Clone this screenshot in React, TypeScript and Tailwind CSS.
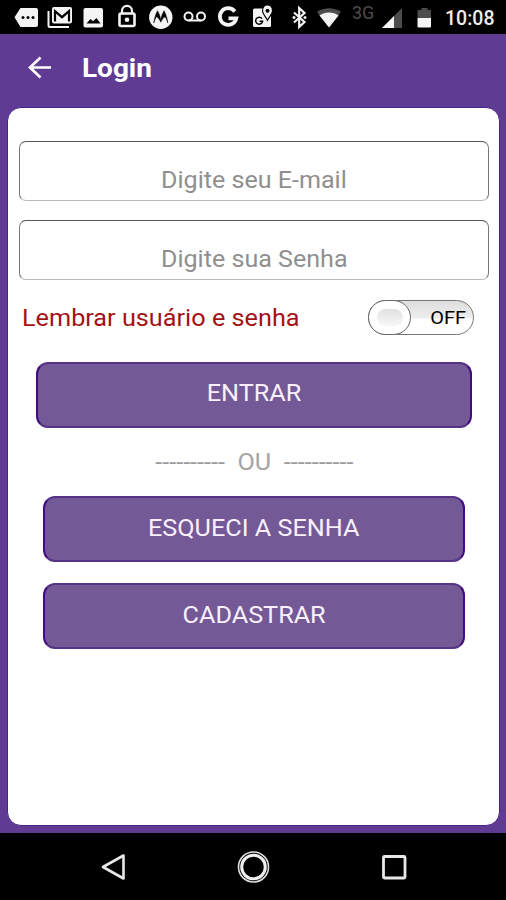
import type { ReactNode } from 'react';

type CellProps = { x: number; w: number; children: ReactNode };

// Each cell shows its own slice of the status bar's coordinate space.
function Cell({ x, w, children }: CellProps) {
  return (
    <svg width={w} height={34} viewBox={`${x} 0 ${w} 34`} className="block shrink-0" fill="none">
      {children}
    </svg>
  );
}

const W = '#f4f4f4';

function StatusBar() {
  return (
    <div className="flex h-[34px] shrink-0 bg-black">
      <Cell x={0} w={42}>
        <path d="M20.500 8H36a2 2 0 0 1 2 2v15a2 2 0 0 1-2 2H20.500l-6-9.700z" fill={W} />
        <circle cx="23" cy="17.500" r="1.500" fill="#000" />
        <circle cx="28" cy="17.500" r="1.500" fill="#000" />
        <circle cx="33" cy="17.500" r="1.500" fill="#000" />
      </Cell>
      <Cell x={42} w={36}>
        <path d="M48.500 11v14.500a1.500 1.500 0 0 0 1.500 1.500h19" stroke={W} strokeWidth="2" />
        <rect x="52" y="7" width="20" height="16.500" rx="2" fill={W} />
        <path d="M55 21.500V11.200l7 6 7-6v10.300" stroke="#000" strokeWidth="2.200" />
        <path d="M55.500 9h13l-6.500 5z" fill={W} />
      </Cell>
      <Cell x={78} w={32}>
        <rect x="83.500" y="8" width="19.500" height="19.500" rx="2" fill={W} />
        <path d="M86.500 23.500l4-4.500 2.500 2.200 3.500-3.200 4 5.500z" fill="#000" />
      </Cell>
      <Cell x={110} w={34}>
        <path d="M122 13.500v-2.600a5 5 0 0 1 10 0v2.600" stroke={W} strokeWidth="2.200" />
        <rect x="119.500" y="13.500" width="15" height="12.500" rx="1.500" stroke={W} strokeWidth="2.600" />
        <circle cx="127" cy="19.800" r="2.300" fill={W} />
      </Cell>
      <Cell x={144} w={34}>
        <circle cx="160.800" cy="17.300" r="11.700" fill={W} />
        <path d="M153.800 23c.6-4.500 1.700-8.500 3.700-12.300 1.500 2.500 2.600 5.400 3.300 9 .7-3.600 1.800-6.500 3.300-9 2 3.800 3.100 7.800 3.700 12.300-.7-2.600-1.600-4.800-2.800-6.300-1.500.8-3 2.800-4.200 5.500-1.200-2.700-2.700-4.700-4.200-5.500-1.200 1.500-2.100 3.700-2.800 6.300z" fill="#000" stroke="#000" strokeWidth=".5" />
      </Cell>
      <Cell x={178} w={34}>
        <circle cx="188.500" cy="16.500" r="4" stroke={W} strokeWidth="2" />
        <circle cx="201" cy="16.500" r="4" stroke={W} strokeWidth="2" />
        <path d="M188.500 20.500H201" stroke={W} strokeWidth="2" />
      </Cell>
      <Cell x={212} w={34}>
        <path d="M234.800 11.500a8.300 8.300 0 1 0 1.500 6.800H228.500" stroke={W} strokeWidth="3.800" />
      </Cell>
      <Cell x={246} w={34}>
        <rect x="253" y="8.500" width="18" height="18.500" rx="1.500" fill={W} />
        <path d="M262 18.600a3.500 3.500 0 1 0 .6 2.700h-3" stroke="#000" strokeWidth="1.500" />
        <path d="M262.500 11c0-3.500 2-6 5-6s5 2.500 5 6c0 3.200-3.300 5.500-5 9.200-1.700-3.700-5-6-5-9.200z" fill={W} stroke="#000" strokeWidth="1.200" />
        <circle cx="267.500" cy="10.800" r="2" fill="#000" />
      </Cell>
      <Cell x={280} w={32}>
        <path d="M294 12.500l10.500 9.500-5.300 5V8l5.300 5L294 22.500" stroke={W} strokeWidth="2.200" />
        <circle cx="294" cy="17.500" r="1.500" fill={W} />
        <circle cx="305" cy="17.500" r="1.500" fill={W} />
      </Cell>
      <Cell x={312} w={34}>
        <path d="M317 12c7-5 17-5 24 0l-12 15.500z" fill="#4c4c4c" />
        <path d="M319.500 15.500c5-4 14-4 19 0l-9.500 12z" fill={W} />
      </Cell>
      <div className="w-[32px] pl-[6px] pt-[4px] font-['Roboto'] text-[18px] leading-[18px] text-[#4c4c4c]">3G</div>
      <Cell x={378} w={30}>
        <path d="M402 8v20h-20z" fill="#4c4c4c" />
        <path d="M394 16v12h-12z" fill={W} />
      </Cell>
      <Cell x={408} w={32}>
        <path d="M417.500 10h4V8h6v2h3.500v8h-13.500z" fill="#4c4c4c" />
        <path d="M417.500 18H431v8.500a1 1 0 0 1-1 1h-11.500a1 1 0 0 1-1-1z" fill={W} />
      </Cell>
      <div className="flex-1 pl-[5px] pt-[9px] font-['Roboto'] text-[19.5px] font-medium leading-[20px] whitespace-nowrap text-[#ededed]">10:08</div>
    </div>
  );
}

function Field({ label }: { label: string }) {
  return (
    <div className="flex h-[60px] justify-center rounded-[7px] border border-x-[#777] border-t-[#555] border-b-[#bbb] pt-[24px] text-[24px] leading-[28px] text-[#8f8f8f]">
      <span className="scale-x-[1.045] whitespace-nowrap">{label}</span>
    </div>
  );
}

function Action({ label, wide }: { label: string; wide?: boolean }) {
  return (
    <button
      className={`${wide ? 'w-[436px] pb-[4px]' : 'w-[422px] pb-[3px]'} flex h-[66px] items-center justify-center self-center rounded-[12px] border-2 border-x-[#430b7f] border-y-[#563386] bg-[#735995] text-[24px] leading-[28px] text-[#faeffd]`}
    >
      <span className="scale-x-[1.05]">{label}</span>
    </button>
  );
}

export default function App() {
  return (
    <div className="flex h-[900px] w-[506px] flex-col overflow-hidden bg-[#603b93] font-['Roboto',sans-serif]">
      <StatusBar />
      <header className="flex h-[73px] shrink-0 items-start pl-[28px] pt-[22px]">
        <svg width="24" height="24" viewBox="0 0 24 24" fill="none" stroke="#fff" strokeWidth="2.700">
          <path d="M23 11.500H2M12.500 1.500L2 11.500l10.500 10" />
        </svg>
        <h1 className="ml-[30px] mt-[-3px] origin-left scale-x-[1.075] text-[26px] font-bold leading-[30px] text-white">Login</h1>
      </header>
      <main className="mb-[7px] ml-[7px] mr-[6px] flex flex-1 flex-col rounded-[14px] border border-[#4b2385] bg-white pl-[11px] pr-[10px] pt-[33px]">
        <div className="flex flex-col gap-[19px]">
          <Field label="Digite seu E-mail" />
          <Field label="Digite sua Senha" />
        </div>
        <div className="mt-[20px] flex h-[36px] items-start justify-between pl-[3px] pr-[15px]">
          <span className="mt-[4px] origin-left scale-x-[1.052] text-[24px] leading-[28px] whitespace-nowrap text-[#a31216]">Lembrar usuário e senha</span>
          <div className="flex h-[35px] w-[106px] items-center justify-between rounded-full border border-[#777] bg-linear-to-b from-[#dedede] from-0% via-[#ededed] via-50% to-white to-55% pr-[7px]">
            <div className="-ml-px flex h-[35px] w-[43px] items-center justify-center rounded-full border border-[#666] bg-white">
              <div className="h-[17px] w-[26px] rounded-full bg-linear-to-b from-[#e2e2e2] to-[#f7f7f7]" />
            </div>
            <span className="origin-right scale-x-[1.05] text-[19px] leading-[22px] text-black">OFF</span>
          </div>
        </div>
        <div className="mt-[26px] flex flex-col">
          <Action label="ENTRAR" wide />
          <div className="flex h-[68px] items-center justify-center text-[24px] leading-[28px] text-[#a5a5a5]">
            <div className="flex scale-x-[1.05] gap-[12px]">
              <span className="text-[#9c9c9c]">----------</span>
              <span>OU</span>
              <span className="text-[#9c9c9c]">----------</span>
            </div>
          </div>
          <Action label="ESQUECI A SENHA" />
          <div className="h-[21px]" />
          <Action label="CADASTRAR" />
        </div>
      </main>
      <nav className="flex h-[67px] shrink-0 items-center bg-black pl-[96px]">
        <svg width="36" height="36" viewBox="0 0 36 36" fill="none" stroke="#e8e8e8" strokeWidth="2.600" strokeLinejoin="round">
          <path d="M27.500 6.500v23L7 18z" />
        </svg>
        <svg width="36" height="36" viewBox="0 0 36 36" fill="none" className="ml-[103px]">
          <circle cx="18.500" cy="18" r="15" stroke="#e0e0e0" strokeWidth="1.600" />
          <circle cx="18.500" cy="18" r="11.800" stroke="#f0f0f0" strokeWidth="3" />
        </svg>
        <svg width="36" height="36" viewBox="0 0 36 36" fill="none" className="ml-[105px]">
          <rect x="7.500" y="7.500" width="21.500" height="21.500" rx="1" stroke="#e8e8e8" strokeWidth="2.800" />
        </svg>
      </nav>
    </div>
  );
}
